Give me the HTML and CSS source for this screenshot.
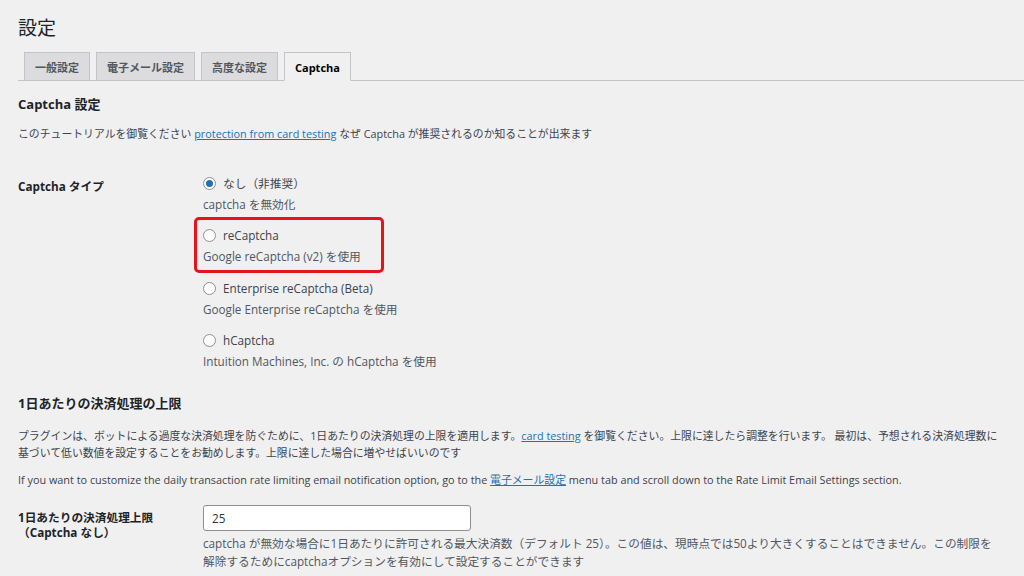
FILE: index.html
```html
<!DOCTYPE html>
<html lang="ja">
<head>
  <meta charset="UTF-8" />
  <meta name="viewport" content="width=device-width, initial-scale=1.0"/>
  <title>設定</title>

  <link rel="stylesheet" href="styles.css">
</head>
<body>
  <div class="wrap">
    <h1 class="page-title">設定</h1>

    <nav class="nav-tabs">
      <a class="nav-tab" href="#">一般設定</a>
      <a class="nav-tab" href="#">電子メール設定</a>
      <a class="nav-tab" href="#">高度な設定</a>
      <a class="nav-tab nav-tab-active" href="#">Captcha</a>
    </nav>

    <h2 class="section-title">Captcha 設定</h2>
    <p class="intro">このチュートリアルを御覧ください <a href="#">protection from card testing</a> なぜ Captcha が推奨されるのか知ることが出来ます</p>

    <div class="form-row captcha-row">
      <div class="row-label">Captcha タイプ</div>
      <div class="row-field">
        <div class="option">
          <label class="option-label"><input type="radio" name="captcha" checked> なし（非推奨）</label>
          <p class="description">captcha を無効化</p>
        </div>
        <div class="option option-marked">
          <label class="option-label"><input type="radio" name="captcha"> reCaptcha</label>
          <p class="description">Google reCaptcha (v2) を使用</p>
        </div>
        <div class="option">
          <label class="option-label"><input type="radio" name="captcha"> Enterprise reCaptcha (Beta)</label>
          <p class="description">Google Enterprise reCaptcha を使用</p>
        </div>
        <div class="option">
          <label class="option-label"><input type="radio" name="captcha"> hCaptcha</label>
          <p class="description">Intuition Machines, Inc. の hCaptcha を使用</p>
        </div>
      </div>
    </div>

    <h2 class="section-title limit-title">1日あたりの決済処理の上限</h2>
    <p class="text">プラグインは、ボットによる過度な決済処理を防ぐために、1日あたりの決済処理の上限を適用します。<a href="#">card testing</a> を御覧ください。上限に達したら調整を行います。 最初は、予想される決済処理数に基づいて低い数値を設定することをお勧めします。上限に達した場合に増やせばいいのです</p>
    <p class="text">If you want to customize the daily transaction rate limiting email notification option, go to the <a href="#">電子メール設定</a> menu tab and scroll down to the Rate Limit Email Settings section.</p>

    <div class="form-row limit-row">
      <div class="row-label">1日あたりの決済処理上限<br>（Captcha なし）</div>
      <div class="row-field">
        <input class="text-input" type="text" value="25">
        <p class="description">captcha が無効な場合に1日あたりに許可される最大決済数（デフォルト 25）。この値は、現時点では50より大きくすることはできません。この制限を解除するためにcaptchaオプションを有効にして設定することができます</p>
      </div>
    </div>
  </div>
</body>
</html>
```

FILE: styles.css
```css
* {
  margin: 0;
  padding: 0;
  box-sizing: border-box;
}

body {
  font-family: 'Open Sans', 'Noto Sans CJK JP', sans-serif;
  font-size: 10.85px;
  line-height: 17px;
  color: #3c434a;
  background-color: #f0f0f1;
  height: 576px;
  overflow: hidden;
}

a {
  color: #2271b1;
}

.wrap {
  padding: 0 18px;
}

.page-title {
  font-size: 19px;
  font-weight: 400;
  line-height: 24px;
  color: #1d2327;
  padding-top: 16px;
}

.nav-tabs {
  display: flex;
  gap: 6px;
  margin-top: 12px;
  padding-left: 6px;
  border-bottom: 1px solid #c3c4c7;
  margin-right: -18px;
}

.nav-tab {
  display: block;
  padding: 6px 10px;
  height: 29px;
  margin-bottom: -1px;
  font-size: 11px;
  font-weight: 700;
  line-height: 17px;
  color: #50575e;
  text-decoration: none;
  background-color: #dcdcde;
  border: 1px solid #c3c4c7;
}

.nav-tab-active {
  background-color: #f0f0f1;
  color: #000;
  border-bottom-color: #f0f0f1;
}

.section-title {
  font-size: 13px;
  font-weight: 700;
  line-height: 18px;
  color: #1d2327;
  margin-top: 14px;
}

.intro {
  margin-top: 12px;
}

.form-row {
  display: grid;
  grid-template-columns: 185px 1fr;
  font-size: 11.7px;
}

.row-label {
  font-weight: 700;
  color: #1d2327;
}

.captcha-row {
  margin-top: 33px;
}

.captcha-row .row-label {
  padding-top: 3px;
}

.option {
  margin-bottom: 14px;
}

.option-label {
  display: flex;
  align-items: center;
  gap: 7px;
  color: #3c434a;
}

.option-label input {
  appearance: none;
  width: 13px;
  height: 13px;
  border: 1px solid #8c8f94;
  border-radius: 50%;
  background-color: #fff;
  display: grid;
  place-content: center;
}

.option-label input:checked::before {
  content: "";
  width: 7px;
  height: 7px;
  border-radius: 50%;
  background-color: #2271b1;
}

.description {
  color: #50575e;
  margin-top: 4px;
}

.option-marked {
  margin-left: -9px;
  padding: 7px 6px 5px;
  width: 190px;
  border: 3px solid #e5141b;
  border-radius: 5px;
  margin-top: -10px;
  margin-bottom: 7px;
}

.limit-title {
  margin-top: 10px;
}

.text {
  margin-top: 15px;
}

.text + .text {
  margin-top: 10px;
}

.limit-row {
  margin-top: 17px;
}

.limit-row .row-label {
  padding-top: 5px;
  line-height: 15px;
}

.text-input {
  width: 268px;
  height: 26px;
  padding: 0 8px;
  font-family: inherit;
  font-size: 11.7px;
  color: #2c3338;
  background-color: #fff;
  border: 1px solid #8c8f94;
  border-radius: 3px;
}

.limit-row .description {
  margin-top: 3px;
  padding-right: 8px;
  line-height: 18px;
}
```
